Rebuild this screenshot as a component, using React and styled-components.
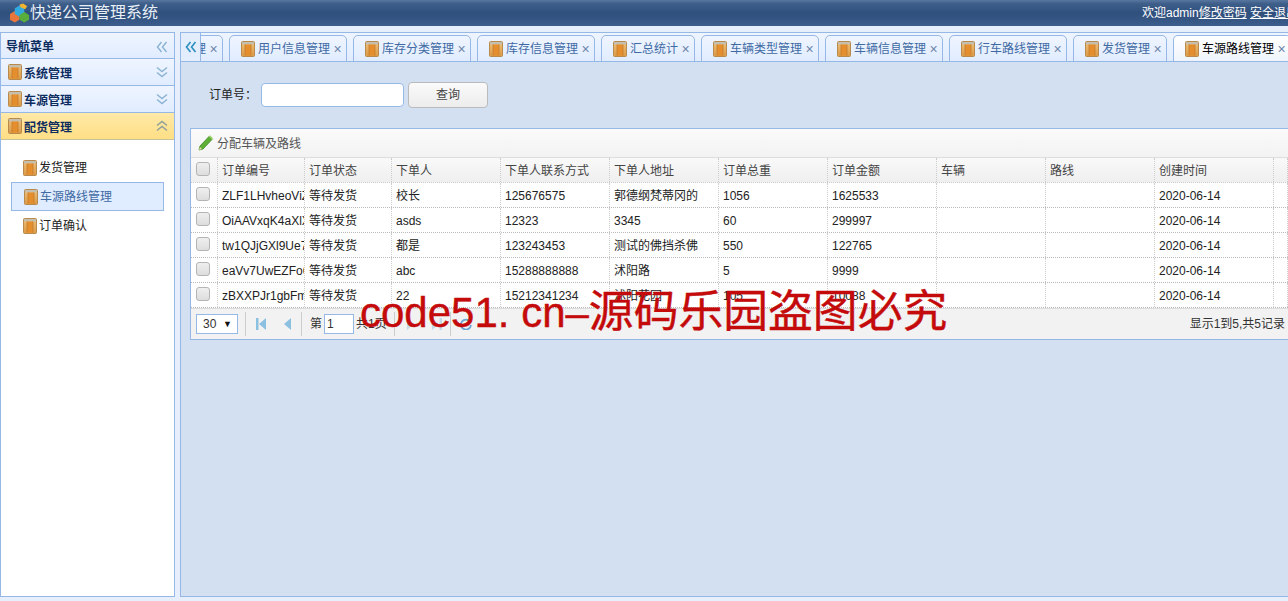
import React from 'react';
import styled, { createGlobalStyle } from 'styled-components';

const Global = createGlobalStyle`
  html, body { margin: 0; padding: 0; height: 601px; overflow: hidden; background: #e6effb; }
  body, button, input, select { font-family: "Liberation Sans", "Noto Sans CJK SC", sans-serif; font-size: 12px; line-height: 16px; }
  * { box-sizing: border-box; }
`;

const Page = styled.div`
  position: relative; width: 1288px; height: 601px; overflow: hidden;
  display: flex; flex-direction: column;
`;
const Header = styled.header`
  height: 26px; flex: none; padding: 0 0 0 10px; display: flex; align-items: center; justify-content: space-between;
  background: linear-gradient(to bottom, #58779f 0%, #3f5f8b 14%, #2f4f7c 50%, #3c5e8c 100%);
  color: #fff; white-space: nowrap; overflow: hidden;
`;
const Brand = styled.div`display: flex; align-items: center; font-size: 16px; line-height: 20px; color: #e9eff7; height: 26px;`;
const Welcome = styled.div`
  width: 146px; flex: none; overflow: hidden; color: #fff; font-size: 12px;
  a { color: #fff; text-decoration: underline; }
`;
const Workspace = styled.div`
  flex: 1; display: flex; align-items: stretch; padding: 6px 0 4px 0; gap: 5px; min-height: 0;
`;
const Side = styled.aside`
  width: 175px; flex: none; background: #fff; border: 1px solid #95b8e7; display: flex; flex-direction: column;
`;
const SideHead = styled.div`
  height: 26px; flex: none; padding: 2px 6px 0 5px; display: flex; align-items: center; justify-content: space-between;
  background: linear-gradient(to bottom, #eff5ff, #e0ecff); border-bottom: 1px solid #95b8e7;
  color: #0e2d5f; font-weight: bold; font-size: 12px;
`;
const AccHead = styled.div`
  height: 27px; flex: none; padding: 3px 6px 0 7px; display: flex; align-items: center; gap: 2px;
  background: ${p => p.$open ? 'linear-gradient(to bottom, #ffe9a8, #ffdf85)' : 'linear-gradient(to bottom, #eff5ff, #e0ecff)'};
  border-bottom: 1px solid ${p => p.$open ? '#c7c29a' : '#95b8e7'};
  color: #0e2d5f; font-weight: bold;
  span { flex: 1; }
  svg { margin-top: -3px; }
`;
const Tree = styled.nav`padding: 13px 10px 0 10px; display: flex; flex-direction: column;`;
const TreeItem = styled.div`
  height: 29px; display: flex; align-items: center; gap: 2px; color: ${p => p.$sel ? '#416aa3' : '#222'};
  background: ${p => p.$sel ? '#e0ecff' : 'transparent'};
  border: 1px solid ${p => p.$sel ? '#95b8e7' : 'transparent'};
  padding-left: ${p => p.$sel ? '12px' : '11px'};
`;
const Main = styled.main`
  flex: 1; min-width: 0; display: flex; flex-direction: column; border-left: 1px solid #95b8e7; position: relative;
`;
const TabStrip = styled.div`
  height: 30px; flex: none; overflow: hidden; border-top: 1px solid #95b8e7; border-bottom: 1px solid #95b8e7;
  background: linear-gradient(to bottom, #eff5ff, #e0ecff); position: relative;
`;
const TabRow = styled.div`display: flex; gap: 6px; margin-left: -76px; padding-top: 2px; width: max-content; height: 29px;`;
const Tab = styled.div`
  height: 27px; padding: 0 4px 0 11px; display: flex; align-items: center; gap: 3px; white-space: nowrap;
  width: ${p => p.$w}px; flex: none;
  border: 1px solid #95b8e7; border-bottom: ${p => p.$active ? '0' : '1px solid #95b8e7'}; border-radius: 5px 5px 0 0;
  background: ${p => p.$active ? 'linear-gradient(to bottom, #ffffff, #eef4fc)' : 'linear-gradient(to bottom, #eff5ff, #e0ecff)'};
  color: ${p => p.$active ? '#000' : '#416aa3'};
  span { flex: 1; }
  i { font-style: normal; color: #6d87ac; font-size: 14px; width: 10px; text-align: center; }
`;
const ScrollLeft = styled.div`
  position: absolute; left: 0; top: 0; width: 20px; height: 28px; display: flex; align-items: center; justify-content: center;
  background: #e3edfc; border-right: 1px solid #95b8e7;
`;
const Content = styled.div`
  flex: 1; min-height: 0; background: #d2e0f2; padding: 20px 0 0 9px; border-bottom: 1px solid #95b8e7;
`;
const SearchBar = styled.div`display: flex; align-items: center; height: 26px; padding-left: 19px; margin-bottom: 20px; color: #222;`;
const SearchLabel = styled.label`width: 52px; flex: none; white-space: nowrap;`;
const SearchInput = styled.input`
  width: 143px; height: 24px; border: 1px solid #95b8e7; border-radius: 4px; background: #fff; outline: none; margin-right: 4px;
`;
const SearchButton = styled.button`
  width: 80px; height: 26px; border: 1px solid #bbb; border-radius: 4px; color: #444; padding: 0;
  background: linear-gradient(to bottom, #fafafa, #ececec);
`;
const Grid = styled.section`
  border: 1px solid #95b8e7; border-right: 0; background: #fff; height: 212px; display: flex; flex-direction: column; overflow: hidden;
`;
const Toolbar = styled.div`
  height: 28px; flex: none; display: flex; align-items: center; gap: 3px; padding: 2px 0 0 7px; color: #555;
  background: linear-gradient(to bottom, #fafafa, #f3f3f3);
  svg { margin-top: -2px; }
`;
const cols = '27px 87px 87px 109px 109px 109px 109px 109px 109px 109px 119px 1fr';
const Row = styled.div`
  display: grid; grid-template-columns: ${cols}; height: ${p => p.$head ? '26px' : '25px'}; flex: none;
  border-bottom: 1px dotted #bbb;
  background: ${p => p.$head ? 'linear-gradient(to bottom, #f9f9f9, #efefef)' : '#fff'};
  ${p => p.$head ? 'border-top: 1px solid #ddd; border-bottom: 1px dotted #ccc;' : ''}
`;
const Cell = styled.div`
  border-right: 1px dotted #ccc; padding: ${p => p.$head ? '2px 0 0 4px' : '1px 0 0 4px'}; display: flex; align-items: center; overflow: hidden; white-space: nowrap;
  color: ${p => p.$head ? '#444' : '#222'};
`;
const CheckCell = styled.div`border-right: 1px dotted #ccc; display: flex; align-items: center; padding: 0 0 3px 5px;`;
const Check = styled.div`
  width: 14px; height: 14px; border: 1px solid #b4b4b4; border-radius: 3px; background: linear-gradient(to bottom, #efefef, #dddddd);
`;
const Pager = styled.div`
  flex: 1; display: flex; align-items: center; padding: 0 3px 0 5px; background: #f2f2f2; border-top: 1px solid #ddd; white-space: nowrap; color: #333;
`;
const PageSize = styled.div`
  width: 42px; height: 20px; border: 1px solid #95b8e7; background: #fff; display: flex; align-items: center; justify-content: space-between; padding: 0 5px 0 6px;
  color: #333; margin-right: 7px;
  b { font-size: 9px; color: #111; }
`;
const Sep = styled.div`width: 1px; height: 24px; background: #ccc; flex: none; margin: ${p => p.$m};`;
const PageIcon = styled.div`width: 26px; display: flex; justify-content: center; align-items: center; flex: none;`;
const PageInput = styled.div`
  width: 30px; height: 20px; border: 1px solid #95b8e7; background: #fff; padding: 1px 0 0 2px; margin: 0 2px; flex: none;
`;
const PageInfo = styled.div`margin-left: auto; color: #333;`;
const Watermark = styled.div`
  position: absolute; left: 360px; top: 286px; color: #c40a0a; font-size: 42px; line-height: 50px; white-space: nowrap;
  -webkit-text-stroke: 0.4px #c40a0a; pointer-events: none;
  span { font-size: 44.8px; }
`;

const Box = ({ s = 14 }) => (
  <svg width={s} height={s + 2} viewBox="0 0 14 16" style={{ flex: 'none' }}>
    <defs>
      <linearGradient id="bx" x1="0" y1="0" x2="0" y2="1">
        <stop offset="0" stopColor="#eec07a" /><stop offset="1" stopColor="#dc9a45" />
      </linearGradient>
    </defs>
    <rect x="0.5" y="0.5" width="13" height="15" rx="1" fill="url(#bx)" stroke="#b98a4e" />
    <rect x="1" y="1" width="12" height="2.5" fill="#c4bfae" />
    <rect x="4" y="3.5" width="6" height="11" fill="#e58e2e" />
    <path d="M4 3.5v11M10 3.5v11" stroke="#bf7a2c" strokeWidth="0.7" />
  </svg>
);
const Chevrons = ({ dir = 'down', color = '#8ab3d3', w = 1.4 }) => {
  const r = { down: 0, up: 180, left: 90 }[dir];
  return (
    <svg width="12" height="12" viewBox="0 0 12 12" style={{ flex: 'none', transform: `rotate(${r}deg)` }}>
      <path d="M1 1.5l5 4 5-4M1 6.5l5 4 5-4" fill="none" stroke={color} strokeWidth={w} />
    </svg>
  );
};
const Logo = () => (
  <svg width="20" height="20" viewBox="0 0 21 20" style={{ flex: 'none' }}>
    <path d="M0 11l5-3 5 3v6l-5 3-5-3z" fill="#e8763c" />
    <path d="M5 5l5-3 5 3v6l-5 3-5-3z" fill="#32a9df" />
    <path d="M10 1l4-1 4 3-2 3-5-2z" fill="#f0b431" />
    <path d="M10 12l5-3 5 3v5l-5 3-5-3z" fill="#58ad3d" />
  </svg>
);
const Pencil = () => (
  <svg width="16" height="16" viewBox="0 0 16 16" style={{ flex: 'none' }}>
    <path d="M1 15l1-4 9-9.5 3 3L5 14z" fill="#5fae35" stroke="#3d8a22" strokeWidth="0.8" />
    <path d="M1 15l1-3 2 2z" fill="#e8d8a8" />
    <path d="M11 1.5l3 3 1-1.2-3-3z" fill="#9bd266" />
  </svg>
);
const First = ({ c }) => <svg width="10" height="12" viewBox="0 0 10 12"><rect x="0" y="0" width="2.5" height="12" fill={c} /><path d="M10 0v12L3 6z" fill={c} /></svg>;
const Prev = ({ c }) => <svg width="7" height="12" viewBox="0 0 7 12"><path d="M7 0v12L0 6z" fill={c} /></svg>;
const Next = ({ c }) => <svg width="7" height="12" viewBox="0 0 7 12"><path d="M0 0v12l7-6z" fill={c} /></svg>;
const Last = ({ c }) => <svg width="10" height="12" viewBox="0 0 10 12"><rect x="7.5" y="0" width="2.5" height="12" fill={c} /><path d="M0 0v12l7-6z" fill={c} /></svg>;
const Refresh = () => <svg width="12" height="12" viewBox="0 0 12 12"><path d="M10 3.5A5 5 0 1 0 11 7" fill="none" stroke="#6ba6d0" strokeWidth="1.8" /><path d="M11.5 0.5v4h-4z" fill="#6ba6d0" /></svg>;

const tabs = [
  ['车源路线管理', 118], ['用户信息管理', 118], ['库存分类管理', 118], ['库存信息管理', 118], ['汇总统计', 94],
  ['车辆类型管理', 118], ['车辆信息管理', 118], ['行车路线管理', 118], ['发货管理', 94], ['车源路线管理', 118],
];
const heads = ['订单编号', '订单状态', '下单人', '下单人联系方式', '下单人地址', '订单总重', '订单金额', '车辆', '路线', '创建时间', ''];
const rows = [
  ['ZLF1LHvheoViZxQ', '等待发货', '校长', '125676575', '郭德纲梵蒂冈的', '1056', '1625533', '', '', '2020-06-14', ''],
  ['OiAAVxqK4aXlXpw', '等待发货', 'asds', '12323', '3345', '60', '299997', '', '', '2020-06-14', ''],
  ['tw1QJjGXl9Ue7kP', '等待发货', '都是', '123243453', '测试的佛挡杀佛', '550', '122765', '', '', '2020-06-14', ''],
  ['eaVv7UwEZFo6TmR', '等待发货', 'abc', '15288888888', '沭阳路', '5', '9999', '', '', '2020-06-14', ''],
  ['zBXXPJr1gbFm8sY', '等待发货', '22', '15212341234', '沭阳花园', '105', '10088', '', '', '2020-06-14', ''],
];

export default function App() {
  return (
    <Page>
      <Global />
      <Header>
        <Brand><Logo />快递公司管理系统</Brand>
        <Welcome>欢迎admin<a>修改密码</a> <a>安全退出</a></Welcome>
      </Header>
      <Workspace>
        <Side>
          <SideHead>导航菜单<Chevrons dir="left" /></SideHead>
          <AccHead><Box /><span>系统管理</span><Chevrons /></AccHead>
          <AccHead><Box /><span>车源管理</span><Chevrons /></AccHead>
          <AccHead $open><Box /><span>配货管理</span><Chevrons dir="up" color="#8d9f9a" /></AccHead>
          <Tree>
            <TreeItem><Box />发货管理</TreeItem>
            <TreeItem $sel><Box />车源路线管理</TreeItem>
            <TreeItem><Box />订单确认</TreeItem>
          </Tree>
        </Side>
        <Main>
          <TabStrip>
            <TabRow>
              {tabs.map(([t, w], i) => (
                <Tab key={i} $w={w} $active={i === tabs.length - 1}><Box /><span>{t}</span><i>×</i></Tab>
              ))}
            </TabRow>
            <ScrollLeft><Chevrons dir="left" color="#2a8fbf" w={1.6} /></ScrollLeft>
          </TabStrip>
          <Content>
            <SearchBar>
              <SearchLabel>订单号：</SearchLabel>
              <SearchInput />
              <SearchButton>查询</SearchButton>
            </SearchBar>
            <Grid>
              <Toolbar><Pencil />分配车辆及路线</Toolbar>
              <Row $head>
                <CheckCell><Check /></CheckCell>
                {heads.map((h, i) => <Cell key={i} $head>{h}</Cell>)}
              </Row>
              {rows.map((r, i) => (
                <Row key={i}>
                  <CheckCell><Check /></CheckCell>
                  {r.map((c, j) => <Cell key={j}>{c}</Cell>)}
                </Row>
              ))}
              <Pager>
                <PageSize>30<b>▼</b></PageSize>
                <Sep $m="0 2px 0 0" />
                <PageIcon><First c="#8cc0e0" /></PageIcon>
                <PageIcon><Prev c="#8cc0e0" /></PageIcon>
                <Sep $m="0 8px 0 1px" />
                第<PageInput>1</PageInput>共1页
                <Sep $m="0 3px 0 7px" />
                <PageIcon><Next c="#c3d9ea" /></PageIcon>
                <PageIcon><Last c="#c3d9ea" /></PageIcon>
                <Sep $m="0 9px 0 0" />
                <Refresh />
                <PageInfo>显示1到5,共5记录</PageInfo>
              </Pager>
            </Grid>
          </Content>
        </Main>
      </Workspace>
      <Watermark>code51. cn–<span>源码乐园盗图必究</span></Watermark>
    </Page>
  );
}
